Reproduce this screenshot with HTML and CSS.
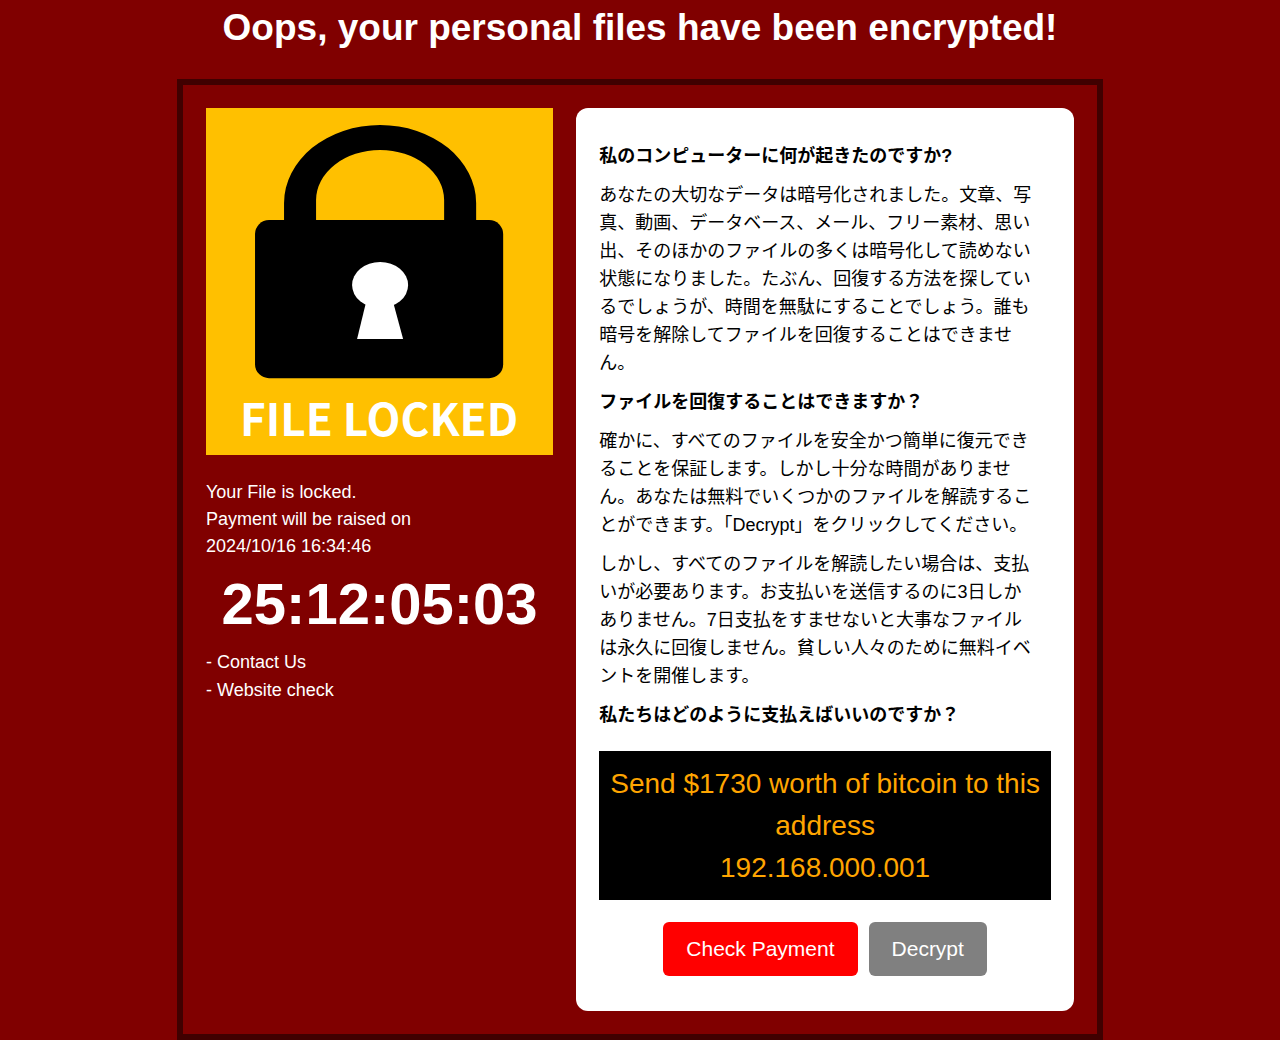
FILE: index.html
```html
<!DOCTYPE html>
<html lang="ja">
<head>
  <meta charset="UTF-8" />
  <meta name="viewport" content="width=device-width, initial-scale=1.0"/>
  <title>File Locked</title>
  <link rel="stylesheet" href="styles.css">
</head>
<body>
  <h1>Oops, your personal files have been encrypted!</h1>

  <div class="container">
    <div class="left">
      <svg class="lock" viewBox="0 0 347 347" role="img" aria-label="File locked">
        <rect width="347" height="347" fill="#ffc000"/>
        <path d="M78 120V95A96 78 0 0 1 270 95V120H238V92A64 50 0 0 0 110 92V120Z"/>
        <rect x="49" y="112" width="248" height="158" rx="14"/>
        <ellipse cx="174" cy="177" rx="28" ry="23" fill="#fff"/>
        <path d="M160 194H187L197 231H151Z" fill="#fff"/>
        <text class="lock-text" x="173" y="328" text-anchor="middle">FILE LOCKED</text>
      </svg>

      <p class="status">
        Your File is locked.<br>
        Payment will be raised on<br>
        2024/10/16 16:34:46
      </p>
      <div class="timer">25:12:05:03</div>
      <div class="links">
        <a href="#">- Contact Us</a>
        <a href="#">- Website check</a>
      </div>
    </div>

    <div class="right">
      <div class="message">
        <h2>私のコンピューターに何が起きたのですか?</h2>
        <p>あなたの大切なデータは暗号化されました。文章、写真、動画、データベース、メール、フリー素材、思い出、そのほかのファイルの多くは暗号化して読めない状態になりました。たぶん、回復する方法を探しているでしょうが、時間を無駄にすることでしょう。誰も暗号を解除してファイルを回復することはできません。</p>
        <h2>ファイルを回復することはできますか？</h2>
        <p>確かに、すべてのファイルを安全かつ簡単に復元できることを保証します。しかし十分な時間がありません。あなたは無料でいくつかのファイルを解読することができます。「Decrypt」をクリックしてください。</p>
        <p>しかし、すべてのファイルを解読したい場合は、支払いが必要あります。お支払いを送信するのに3日しかありません。7日支払をすませないと大事なファイルは永久に回復しません。貧しい人々のために無料イベントを開催します。</p>
        <h2>私たちはどのように支払えばいいのですか？</h2>
      </div>

      <div class="bitcoin">
        Send $1730 worth of bitcoin to this address<br>
        192.168.000.001
      </div>

      <div class="buttons">
        <button type="button" class="check">Check Payment</button>
        <button type="button" class="decrypt">Decrypt</button>
      </div>
    </div>
  </div>
</body>
</html>
```
FILE: styles.css
```css
* {
  box-sizing: border-box;
}

html {
  background: #ffffff;
}

body {
  margin: 0;
  font-family: "Liberation Sans", Arial, "Noto Sans CJK JP", sans-serif;
  font-size: 18px;
  line-height: 28px;
  background-color: #800000;
  color: #ffffff;
}

h1 {
  margin: 0 0 23px;
  font-size: 37px;
  line-height: 56px;
  text-align: center;
}

.container {
  display: flex;
  gap: 23px;
  width: 100%;
  max-width: 926px;
  margin: 0 auto;
  padding: 23px;
  border: 6px solid #400000;
}

.left {
  flex: 0 0 40%;
}

.lock {
  display: block;
  width: 100%;
}

.lock-text {
  font-family: "Noto Sans CJK JP", sans-serif;
  font-size: 44px;
  font-weight: bold;
  fill: #ffffff;
}

.status {
  margin: 24px 0 0;
  line-height: 27px;
}

.timer {
  font-size: 58px;
  font-weight: bold;
  line-height: 88px;
  text-align: center;
}

.links a {
  display: block;
  color: #ffffff;
  text-decoration: none;
}

.right {
  flex: 1;
  padding: 34px 23px 35px;
  background-color: #ffffff;
  color: #000000;
  border-radius: 12px;
}

.message {
  display: flex;
  flex-direction: column;
  gap: 11px;
  max-width: 24em;
}

.message h2,
.message p {
  margin: 0;
  font-size: 18px;
}

.bitcoin {
  margin: 22px 0;
  padding: 12px 11px 11px;
  background-color: #000000;
  color: #ffa500;
  font-size: 28px;
  line-height: 42px;
  text-align: center;
}

.buttons {
  display: flex;
  justify-content: center;
  gap: 11px;
}

button {
  padding: 11px 23px;
  border: none;
  border-radius: 6px;
  font-family: inherit;
  font-size: 21px;
  line-height: 32px;
  color: #ffffff;
  cursor: pointer;
}

.check {
  background-color: #ff0000;
}

.decrypt {
  background-color: #808080;
}
```
